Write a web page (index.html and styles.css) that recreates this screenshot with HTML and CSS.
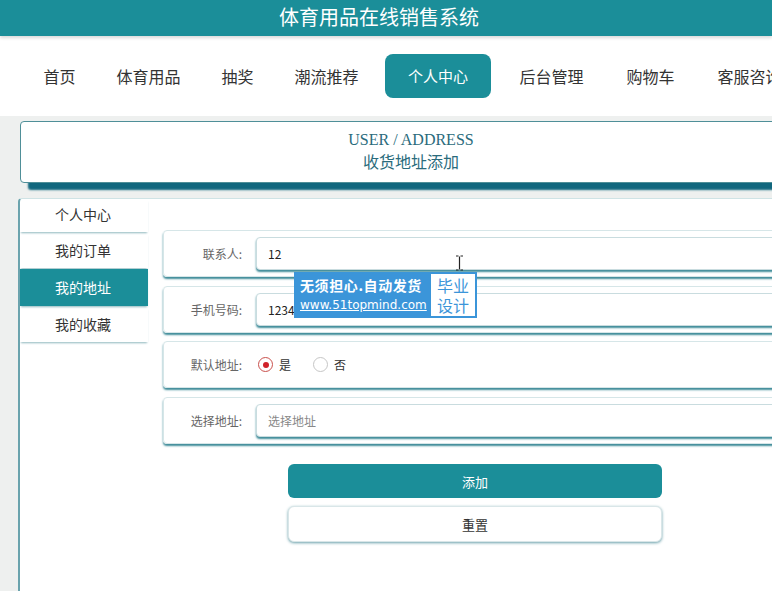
FILE: index.html
```html
<!DOCTYPE html>
<html lang="zh-CN">
<head>
    <meta charset="UTF-8">
    <title>体育用品在线销售系统</title>
    <link rel="stylesheet" href="styles.css">
</head>
<body>
    <div class="top-title">体育用品在线销售系统</div>
    <div class="nav">
        <a class="nav-item">首页</a>
        <a class="nav-item">体育用品</a>
        <a class="nav-item">抽奖</a>
        <a class="nav-item">潮流推荐</a>
        <a class="nav-item active">个人中心</a>
        <a class="nav-item">后台管理</a>
        <a class="nav-item">购物车</a>
        <a class="nav-item">客服咨询</a>
    </div>

    <div class="main">
        <!-- 面包屑 -->
        <div class="crumb">
            <div class="crumb-en">USER / ADDRESS</div>
            <div class="crumb-cn">收货地址添加</div>
        </div>

        <div class="panel">
            <div class="side">
                <div class="side-item head">个人中心</div>
                <div class="side-item">我的订单</div>
                <div class="side-item active">我的地址</div>
                <div class="side-item">我的收藏</div>
            </div>

            <div class="form">
                <div class="row">
                    <label class="label">联系人:</label>
                    <input class="input" type="text" value="12">
                </div>
                <div class="row">
                    <label class="label">手机号码:</label>
                    <input class="input" type="text" value="12345678901">
                </div>
                <div class="row">
                    <label class="label">默认地址:</label>
                    <div class="radios">
                        <span class="radio on"></span><span class="radio-text">是</span>
                        <span class="radio"></span><span class="radio-text">否</span>
                    </div>
                </div>
                <div class="row">
                    <label class="label">选择地址:</label>
                    <input class="input" type="text" placeholder="选择地址">
                </div>
                <div class="btns">
                    <button class="btn btn-add">添加</button>
                    <button class="btn btn-reset">重置</button>
                </div>
            </div>
        </div>
    </div>

    <!-- 水印 -->
    <div class="mark">
        <div class="mark-left">
            <div class="mark-t1">无须担心.自动发货</div>
            <div class="mark-t2">www.51topmind.com</div>
        </div>
        <div class="mark-right">毕业<br>设计</div>
    </div>
    <svg class="cursor" width="9" height="16" viewBox="0 0 9 16">
        <path d="M1 1h2.5M5.5 1H8M4.5 1.5v13M1 15h2.5M5.5 15H8" stroke="#222" stroke-width="1.2" fill="none"/>
    </svg>
</body>
</html>
```

FILE: styles.css
```css
html, body {
    margin: 0;
    padding: 0;
    overflow: hidden;
}
body {
    font-family: "Noto Sans CJK SC", "Liberation Sans", sans-serif;
    background: #eef0ef;
    width: 1000px;
    height: 591px;
    position: relative;
}
.top-title {
    width: 772px;
    height: 36px;
    line-height: 34px;
    background: #1b8e99;
    color: #fff;
    font-size: 20px;
    text-align: center;
    box-sizing: border-box;
    padding-right: 14px;
    box-shadow: 0 2px 3px rgba(0, 0, 0, 0.15);
    position: relative;
}
.nav {
    height: 80px;
    background: #fff;
    display: flex;
    align-items: center;
    padding-left: 23px;
}
.nav-item {
    padding: 0 20.5px;
    font-size: 16px;
    color: #333;
    white-space: nowrap;
}
.nav-item.active {
    background: #1b8e99;
    color: #fff;
    font-size: 15px;
    height: 44px;
    line-height: 44px;
    padding: 0 23px;
    margin: 0 7px 0 6px;
    border-radius: 8px;
}
.nav-item.active ~ .nav-item {
    padding: 0 21.5px;
}
.main {
    padding: 5px 0 0 20px;
}
.crumb {
    width: 782px;
    height: 62px;
    background: #fff;
    border: 1px solid #4f8f98;
    border-radius: 4px;
    box-shadow: 7px 8px 2px -1px #11677e;
    text-align: center;
    color: #2a6b7c;
    padding-top: 8px;
    box-sizing: border-box;
}
.crumb-en {
    font-family: "Liberation Serif", serif;
    font-size: 16px;
    line-height: 20px;
}
.crumb-cn {
    font-size: 16px;
    line-height: 22px;
}
.panel {
    margin-top: 15px;
    margin-left: -2px;
    background: #fff;
    border-left: 2px solid #6aa3ad;
    border-top: 1px solid #cfe3e5;
    border-radius: 4px 0 0 0;
    height: 400px;
    display: flex;
}
.side {
    width: 128px;
    flex-shrink: 0;
}
.side-item {
    height: 35px;
    line-height: 34px;
    padding-left: 35px;
    font-size: 14px;
    color: #333;
    box-shadow: 0 2px 2px -1px #8fb7bd;
    margin-bottom: 1px;
}
.side-item.head {
    height: 33px;
    line-height: 31px;
}
.side-item.active {
    background: #1b8e99;
    color: #fff;
    height: 37px;
    line-height: 36px;
}
.form {
    width: 624px;
    padding: 31px 0 0 15px;
}
.row {
    display: flex;
    align-items: center;
    height: 47px;
    border: 1px solid #d6e6e8;
    border-radius: 4px;
    box-sizing: border-box;
    box-shadow: 0 2px 2px #3f8c99;
    margin-bottom: 8.5px;
    width: 640px;
}
.label {
    width: 78px;
    text-align: right;
    font-size: 12px;
    color: #666;
    margin-right: 14px;
}
.input {
    flex: 1;
    height: 31px;
    border: 1px solid #c9dcdf;
    border-radius: 4px;
    box-shadow: 0 2px 2px #3f8c99;
    padding: 0 11px;
    font-size: 12px;
    color: #222;
    font-family: "Noto Sans CJK SC", "Liberation Sans", sans-serif;
    outline: none;
}
.input::placeholder {
    color: #888;
}
.radios {
    display: flex;
    align-items: center;
    padding-left: 2px;
}
.radio {
    width: 15px;
    height: 15px;
    border: 1px solid #c6c6c6;
    border-radius: 50%;
    box-sizing: border-box;
    position: relative;
    margin-right: 6px;
}
.radio.on {
    border-color: #c9504c;
}
.radio.on::after {
    content: "";
    position: absolute;
    left: 3.5px;
    top: 3.5px;
    width: 6px;
    height: 6px;
    border-radius: 50%;
    background: #d0222a;
}
.radio-text {
    font-size: 12px;
    color: #333;
    margin-right: 22px;
}
.btns {
    display: flex;
    flex-direction: column;
    align-items: center;
    padding-top: 12px;
    gap: 8px;
}
.btn {
    width: 374px;
    height: 34px;
    border-radius: 6px;
    font-size: 13px;
    font-family: "Noto Sans CJK SC", "Liberation Sans", sans-serif;
    cursor: pointer;
}
.btn-add {
    background: #1b8e99;
    color: #fff;
    border: none;
}
.btn-reset {
    background: #fff;
    color: #333;
    border: 1px solid #d9e6e8;
    box-shadow: 0 1px 3px #6aa0aa;
    height: 36px;
}
.mark {
    position: absolute;
    left: 294px;
    top: 272px;
    width: 183px;
    height: 46px;
    background: #3b95d9;
    display: flex;
    box-sizing: border-box;
    padding: 2px;
}
.mark-left {
    flex: 1;
    color: #fff;
    padding-left: 4px;
}
.mark-t1 {
    font-size: 14px;
    font-weight: bold;
    line-height: 22px;
    letter-spacing: 0.6px;
}
.mark-t2 {
    font-family: "DejaVu Sans", sans-serif;
    font-size: 12px;
    line-height: 18px;
    text-decoration: underline;
}
.mark-right {
    width: 44px;
    background: #fff;
    color: #3b95d9;
    font-size: 16px;
    line-height: 20px;
    text-align: center;
    padding-top: 1px;
}
.cursor {
    position: absolute;
    left: 455px;
    top: 255px;
}
```
